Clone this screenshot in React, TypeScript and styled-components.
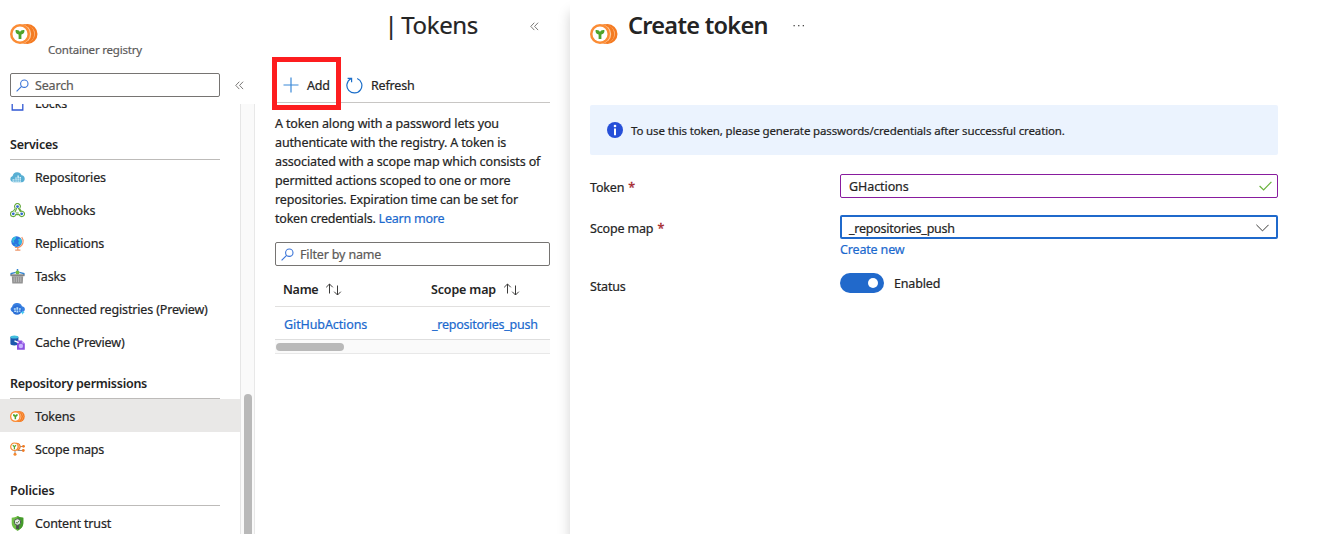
import React from "react";
import styled, { createGlobalStyle } from "styled-components";

const GlobalStyle = createGlobalStyle`
  * { box-sizing: border-box; }
  body {
    margin: 0;
    background: #fff;
    color: #242424;
    font-family: "Noto Sans", "Open Sans", sans-serif;
    font-size: 12.5px;
    overflow: hidden;
  }
  svg { display: block; flex: none; }
`;

const Page = styled.div`
  display: grid;
  grid-template-columns: 255px 315px 1fr;
  width: 1344px;
  height: 534px;
  overflow: hidden;
`;

const Label = styled.span<{ $ls?: number; $bold?: boolean }>`
  white-space: nowrap;
  letter-spacing: ${(p) => p.$ls ?? -0.16}px;
  -webkit-text-stroke: ${(p) => (p.$bold ? "0" : "0.2px")};
`;

/* Sidebar */
const Sidebar = styled.aside`
  display: flex;
  flex-direction: column;
  height: 534px;
  overflow: hidden;
`;

const ResourceHeader = styled.header`
  display: flex;
  height: 73px;
  padding: 24px 0 0 10px;
  gap: 10px;
  flex: none;
`;

const ResourceType = styled.div`
  padding-top: 18px;
  line-height: 16px;
  font-size: 11.5px;
  color: #5c5b5a;
`;

const SearchRow = styled.div`
  display: flex;
  align-items: center;
  gap: 15px;
  height: 24px;
  padding-left: 10px;
  flex: none;
`;

const SearchBox = styled.div<{ $width: number }>`
  display: flex;
  align-items: center;
  gap: 6px;
  width: ${(p) => p.$width}px;
  height: 24px;
  padding: 0 5px;
  border: 1px solid #767472;
  border-radius: 2px;
  color: #5c5a58;
`;

const NavViewport = styled.div`
  display: grid;
  grid-template-columns: 240px 15px;
  margin-top: 7px;
  height: 430px;
  overflow: hidden;
`;

const NavList = styled.nav`
  margin-top: -18px;
`;

const NavHeading = styled.h2`
  display: flex;
  align-items: center;
  height: 41px;
  margin: 0 20px 0 10px;
  padding-top: 10px;
  border-bottom: 1px solid #bdbbb9;
  font-size: 12.5px;
  font-weight: 600;
`;

const NavItem = styled.div<{ $active?: boolean }>`
  display: flex;
  align-items: center;
  gap: 10px;
  height: 33px;
  padding-left: 10px;
  padding-top: 1px;
  background: ${(p) => (p.$active ? "#e9e8e7" : "transparent")};
`;

const ScrollTrack = styled.div`
  padding: 290px 0 0 3px;
  background: #fafafa;
  border-left: 1px solid #e6e6e6;
  border-right: 1px solid #e8e8e8;
`;

const ScrollThumb = styled.div`
  width: 8px;
  height: 300px;
  border-radius: 4px;
  background: #b9b9b9;
`;

/* Token list */
const ListPane = styled.section`
  display: flex;
  flex-direction: column;
  padding: 0 20px;
`;

const ListTitle = styled.header`
  display: flex;
  align-items: center;
  justify-content: flex-end;
  gap: 52px;
  height: 52px;
  padding-right: 11px;
  font-size: 24px;
  line-height: 32px;
`;

const TitleText = styled.div`
  padding-bottom: 3px;
  word-spacing: -2px;
`;

const Toolbar = styled.div`
  display: flex;
  align-items: center;
  height: 51px;
  padding: 16px 0 0 8px;
  border-bottom: 1px solid #c8c6c4;
  position: relative;
`;

const ToolButton = styled.div<{ $gap: number }>`
  display: flex;
  align-items: center;
  gap: ${(p) => p.$gap}px;
  margin-right: 16px;
`;

const Highlight = styled.div`
  position: absolute;
  left: -3px;
  top: 5px;
  width: 69px;
  height: 53px;
  border: 5px solid #fd1d1f;
`;

const Description = styled.p`
  margin: 11px 0 14px;
  line-height: 19px;
`;

const Line = styled.span`
  display: block;
`;

const Link = styled.a`
  color: #1b69ce;
`;

const TableRow = styled.div<{ $head?: boolean }>`
  display: grid;
  grid-template-columns: 148px 1fr;
  align-items: center;
  height: ${(p) => (p.$head ? 41 : 33)}px;
  padding: ${(p) => (p.$head ? "6px 0 0 8px" : "1px 0 0 9px")};
  border-bottom: ${(p) => (p.$head ? "1px solid #e1e0df" : "0")};
  font-weight: ${(p) => (p.$head ? 600 : 400)};
  color: ${(p) => (p.$head ? "#242424" : "#1b69ce")};
`;

const HeadCell = styled.div`
  display: flex;
  align-items: center;
  gap: 7px;
`;

const HorizontalTrack = styled.div`
  height: 15px;
  padding: 3px 1px;
  margin-top: -1px;
  background: #fafafa;
  border-top: 1px solid #dedede;
  border-bottom: 1px solid #e8e8e8;
`;

const HorizontalThumb = styled.div`
  width: 68px;
  height: 8px;
  border-radius: 4px;
  background: #b9b9b9;
`;

/* Create token blade */
const Blade = styled.main`
  padding-left: 20px;
  background: #fff;
  box-shadow: 0 12px 12px rgba(0, 0, 0, 0.18);
`;

const BladeHeader = styled.header`
  display: flex;
  height: 105px;
  padding-top: 10px;
`;

const BladeIcon = styled.div`
  padding-top: 14px;
  width: 38px;
`;

const BladeTitle = styled.h1`
  margin: 0;
  width: 165px;
  font-size: 23.5px;
  font-weight: 600;
  line-height: 31px;
`;

const InfoBanner = styled.div`
  display: flex;
  align-items: center;
  gap: 8px;
  width: 688px;
  height: 50px;
  padding-left: 17px;
  background: #ebf3fe;
  border-radius: 2px;
  font-size: 11.5px;
`;

const Field = styled.div<{ $top: number }>`
  display: grid;
  grid-template-columns: 250px 438px;
  margin-top: ${(p) => p.$top}px;
`;

const FieldLabel = styled.label<{ $top?: number }>`
  padding-top: ${(p) => p.$top ?? 5}px;
  line-height: 18px;
`;

const Required = styled.span`
  color: #a4262c;
  margin-left: 4px;
  -webkit-text-stroke: 0.3px;
`;

const Input = styled.div<{ $focus?: boolean }>`
  display: flex;
  align-items: center;
  justify-content: space-between;
  height: 24px;
  padding: ${(p) => (p.$focus ? "2px 7px 0 7px" : "0 5px 0 8px")};
  border: ${(p) => (p.$focus ? "2px solid #1f69cb" : "1px solid #881c9e")};
  border-radius: 2px;
`;

const CreateLink = styled(Link)`
  display: block;
  line-height: 18px;
  padding-top: 2px;
`;

const StatusValue = styled.div`
  display: flex;
  align-items: center;
  align-self: start;
  gap: 10px;
  height: 20px;
`;

const Toggle = styled.div`
  display: flex;
  align-items: center;
  justify-content: flex-end;
  width: 44px;
  height: 20px;
  padding-right: 6px;
  border-radius: 10px;
  background: #2169cb;
`;

const Knob = styled.div`
  width: 10px;
  height: 10px;
  border-radius: 50%;
  background: #fff;
`;

const CoinsIcon = ({ width, height }: { width: number; height: number }) => (
  <svg width={width} height={height} viewBox="0 0 28 20" preserveAspectRatio="none">
    <circle cx="17.5" cy="10" r="10" fill="#f57a20" />
    <circle cx="15.8" cy="10" r="9" fill="#fdd6b0" />
    <circle cx="14.5" cy="10" r="9.800" fill="#f47b22" />
    <circle cx="12" cy="10" r="9.200" fill="#fdcfa5" />
    <circle cx="10" cy="10" r="10" fill="#fb8c35" />
    <circle cx="10" cy="10" r="7.500" fill="#fff" />
    <path d="M5.500 6.200c2.300-.5 4 .4 4.500 1.800.5-1.400 2.300-2.300 4.500-1.800.1 2.400-1.200 3.900-3.100 4.200v4.500H8.600v-4.500c-2-.3-3.200-1.800-3.100-4.200z" fill="#4fa32a" />
  </svg>
);

const ChevronsLeft = () => (
  <svg width="9" height="9" viewBox="0 0 9 9" fill="none" stroke="#6b6967" strokeWidth="0.9">
    <path d="M4.300.7.8 4.400l3.500 3.700M8.100.7 4.600 4.400l3.500 3.700" />
  </svg>
);

const SearchIcon = () => (
  <svg width="13" height="13" viewBox="0 0 13 13" fill="none" stroke="#3a74d8" strokeWidth="1.1">
    <circle cx="8.300" cy="4.700" r="3.700" />
    <path d="M5.600 7.400.6 12.300" />
  </svg>
);

const SortIcon = () => (
  <svg width="17" height="13" viewBox="0 0 17 13" fill="none" stroke="#3b3a39" strokeWidth="1">
    <path d="M4.500 10.500V1M1.200 4.300 4.500 1l3.300 3.300M12.500 2.500V12M9.200 8.700l3.300 3.300 3.300-3.300" />
  </svg>
);

const LockIcon = () => (
  <svg width="15" height="15" viewBox="0 0 15 15" fill="none" stroke="#3158d3" strokeWidth="1.300">
    <path d="M4.500 6V3.500a3 3 0 0 1 6 0V6M2.200 6h10.600v8H2.200z" />
  </svg>
);

const RepositoriesIcon = () => (
  <svg width="15" height="15" viewBox="0 0 15 15">
    <path d="M3 12.300A3.300 3.300 0 0 1 2.600 5.900 4.700 4.700 0 0 1 11.600 5.300a3.600 3.600 0 0 1 .6 7z" fill="#58afd3" />
    <path d="M2.500 9.300h2v2.500h-2zM5.300 7.500h1.500v4.300H5.300zM7.400 5.500h1.500v6.300H7.400zM9.500 7h1.500v4.800H9.500z" fill="#d6eff9" />
    <path d="M2.500 10.400H11M5.300 8.700H11" stroke="#58afd3" strokeWidth=".5" />
  </svg>
);

const WebhooksIcon = () => (
  <svg width="15" height="15" viewBox="0 0 15 15" fill="none" stroke="#63a83a" strokeWidth="1.100">
    <path d="M5.300 5.200a2.800 2.800 0 1 1 4.500-.2M5.300 5.200 3.300 8.300M9.400 5.300l1.900 3M6.800 5 4.900 9.200M8.300 5l2 3.600" />
    <path d="M3.300 8.200a2.700 2.700 0 1 0 2.500 3.400h3.400a2.700 2.700 0 1 0 .8-2.700M5.800 10h3" />
    <circle cx="7.500" cy="3.600" r="1.400" fill="#3169cf" stroke="none" />
    <circle cx="3.300" cy="10.800" r="1.400" fill="#3169cf" stroke="none" />
    <circle cx="11.700" cy="10.800" r="1.400" fill="#3169cf" stroke="none" />
  </svg>
);

const ReplicationsIcon = () => (
  <svg width="15" height="15" viewBox="0 0 15 15">
    <path d="M11.700 1.100c2.500 3.300 1.900 8.700-3.300 10.400l-3.500-.2M7.800 11.500v2.600M5.200 14.200h5.200" fill="none" stroke="#ee9568" strokeWidth="1.200" />
    <circle cx="6.600" cy="5.600" r="5.300" fill="#2c76df" />
    <path d="M2 3.100C3.400 1.200 5 .7 6.200.9L5.600 3 3.800 4.600l.6 1.900-1.700.2zM8 3.100l2.700-.7c1.200 1.500 1.300 3.600.6 5.200L9.500 9 8.200 7.200l.7-1.700zM5 8l2 .8-.9 1.700z" fill="#35c0dd" />
  </svg>
);

const TasksIcon = () => (
  <svg width="15" height="15" viewBox="0 0 15 15">
    <path d="M1.200 6.500V4.600l4.500-1.200M13.800 6.500V4.600L9.300 3.400M7.500 0v3" fill="none" stroke="#3385d1" strokeWidth="1.500" />
    <circle cx="7.500" cy="3.400" r="2" fill="#73ba45" />
    <path d="M.5 5.300h14v1.900h-14z" fill="#858585" />
    <path d="M1.800 7.200h11.400l-.5 7.300H2.300z" fill="#929292" />
    <path d="M4.200 8.200v5M6.400 8.200v5M8.600 8.200v5M10.800 8.200v5" stroke="#c2c2c2" strokeWidth=".8" />
  </svg>
);

const ConnectedIcon = () => (
  <svg width="15" height="15" viewBox="0 0 15 15">
    <path d="M2.600 9.900A2.700 2.700 0 0 1 2 4.900 5.300 5.300 0 0 1 12 4.300c1.900.3 2.900 1.600 2.900 3 0 1.500-1.100 2.700-2.700 2.700z" fill="#377fe1" />
    <circle cx="7" cy="8" r="4.800" fill="#2c70d6" />
    <path d="M3.800 6.300h2v1.500h-2zM6.400 5.200h1.800v2.600H6.400zM9 6.300h1.800v1.500H9zM4.200 8.600h1.800v1.400H4.200zM6.500 8.600h1.800v1.800H6.500zM9 8.600h1.500v1.200H9z" fill="#b9dffc" />
    <path d="m10.200 10.500 1.800-.6.600-1.300.7 1.300 1.400.7-1.400.7-.7 1.400-.6-1.400z" fill="#43c9f1" />
  </svg>
);

const CacheIcon = () => (
  <svg width="15" height="15" viewBox="0 0 15 15">
    <path d="M.4 2v6.800c0 1 1.700 1.600 4 1.600s4-.6 4-1.600V2z" fill="#1c58ad" />
    <ellipse cx="4.400" cy="2" rx="4" ry="1.500" fill="#42bedd" />
    <path d="M7 5.600h4.800l3 2.900v6.200H7z" fill="#8b4fe0" />
    <path d="M11.800 5.600v2.900h3z" fill="#c7a5f6" />
    <circle cx="10.900" cy="11" r="2.200" fill="#c6b3ff" />
    <path d="M4.500 5.800 8.600 7.700" stroke="#fff" strokeWidth="1.300" />
  </svg>
);

const ScopeMapsIcon = () => (
  <svg width="15" height="15" viewBox="0 0 15 15">
    <path d="M9 4.500h4M7.500 8.500H13M5 8v5" stroke="#8e8e8e" strokeWidth="1" />
    <circle cx="6.800" cy="4.700" r="3.500" fill="#f6b37c" stroke="#f17a22" />
    <circle cx="4.400" cy="4.700" r="3.700" fill="#fff" stroke="#f58930" strokeWidth="1.200" />
    <path d="m2.800 3.300 1.600 1.500L6 3.300M4.400 4.500v2.700" fill="none" stroke="#55a42e" strokeWidth="1.200" />
    <circle cx="13.500" cy="4.300" r="1.400" fill="#f17a22" />
    <circle cx="13.300" cy="8.500" r="1.400" fill="#f17a22" />
    <circle cx="5" cy="12.300" r="1.500" fill="#f58930" />
  </svg>
);

const ShieldIcon = () => (
  <svg width="15" height="15" viewBox="0 0 15 15">
    <path d="M7.500 0C5.700 1.300 3.800 1.700 1.700 1.700V7c0 4 3.300 6.500 5.800 7.800 2.500-1.300 5.800-3.800 5.800-7.800V1.700C11.200 1.700 9.300 1.300 7.500 0z" fill="#6fbf45" />
    <path d="M7.500 0v14.800c2.500-1.300 5.800-3.800 5.800-7.800V1.700C11.200 1.700 9.300 1.300 7.500 0z" fill="#449a2c" />
    <path d="M6.100 8h2.800v5H6.100z" fill="#4c4f50" />
    <circle cx="7.500" cy="6" r="3.200" fill="#e8ede5" stroke="#44504a" strokeWidth=".9" />
    <path d="m5.900 6 1.200 1.300 2.200-2.600" fill="none" stroke="#46773a" strokeWidth=".9" />
  </svg>
);

const PlusIcon = () => (
  <svg width="16" height="16" viewBox="0 0 16 16" stroke="#3b89d7" strokeWidth="1.200">
    <path d="M8 .5v15M.5 8h15" />
  </svg>
);

const RefreshIcon = () => (
  <svg width="17" height="17" viewBox="0 0 17 17" fill="none" stroke="#1b6ec9" strokeWidth="1.200">
    <path d="M11.200 1.500a7.500 7.500 0 1 1-6.300.3M1.600 1.300h4v4" />
  </svg>
);

const InfoIcon = () => (
  <svg width="16" height="16" viewBox="0 0 16 16">
    <circle cx="8" cy="8" r="8" fill="#264fd8" />
    <circle cx="8" cy="4" r="1.300" fill="#fff" />
    <path d="M8 6.500v6.700" stroke="#fff" strokeWidth="2" />
  </svg>
);

const MoreIcon = () => (
  <svg width="13" height="32" viewBox="0 0 13 32" fill="#4a4948">
    <rect x="0.500" y="15" width="1.300" height="1.300" />
    <rect x="5.100" y="15" width="1.300" height="1.300" />
    <rect x="9.700" y="15" width="1.300" height="1.300" />
  </svg>
);

const CheckIcon = () => (
  <svg width="13" height="10" viewBox="0 0 13 10" fill="none" stroke="#69b23c" strokeWidth="1.200">
    <path d="m.6 5 4 4L12.400.8" />
  </svg>
);

const ChevronDown = () => (
  <svg width="13" height="8" viewBox="0 0 13 8" fill="none" stroke="#3b3a39" strokeWidth="1">
    <path d="m.4.8 6.100 6.100L12.600.8" />
  </svg>
);

const services = [
  { label: "Repositories", icon: <RepositoriesIcon /> },
  { label: "Webhooks", icon: <WebhooksIcon /> },
  { label: "Replications", icon: <ReplicationsIcon /> },
  { label: "Tasks", icon: <TasksIcon /> },
  { label: "Connected registries (Preview)", icon: <ConnectedIcon /> },
  { label: "Cache (Preview)", icon: <CacheIcon /> },
];

const description = [
  "A token along with a password lets you",
  "authenticate with the registry. A token is",
  "associated with a scope map which consists of",
  "permitted actions scoped to one or more",
  "repositories. Expiration time can be set for",
];

export default function App() {
  return (
    <Page>
      <GlobalStyle />
      <Sidebar>
        <ResourceHeader>
          <CoinsIcon width={28} height={20} />
          <ResourceType><Label $ls={-0.2}>Container registry</Label></ResourceType>
        </ResourceHeader>
        <SearchRow>
          <SearchBox $width={210}><SearchIcon /><Label>Search</Label></SearchBox>
          <ChevronsLeft />
        </SearchRow>
        <NavViewport>
          <NavList>
            <NavItem><LockIcon /><Label>Locks</Label></NavItem>
            <NavHeading><Label $bold $ls={-0.22}>Services</Label></NavHeading>
            {services.map((s) => (
              <NavItem key={s.label}>{s.icon}<Label>{s.label}</Label></NavItem>
            ))}
            <NavHeading><Label $bold $ls={-0.26}>Repository permissions</Label></NavHeading>
            <NavItem $active><CoinsIcon width={15} height={11} /><Label>Tokens</Label></NavItem>
            <NavItem><ScopeMapsIcon /><Label>Scope maps</Label></NavItem>
            <NavHeading><Label $bold>Policies</Label></NavHeading>
            <NavItem><ShieldIcon /><Label>Content trust</Label></NavItem>
          </NavList>
          <ScrollTrack><ScrollThumb /></ScrollTrack>
        </NavViewport>
      </Sidebar>

      <ListPane>
        <ListTitle>
          <TitleText><Label $ls={-0.35}>| Tokens</Label></TitleText>
          <ChevronsLeft />
        </ListTitle>
        <Toolbar>
          <ToolButton $gap={8}><PlusIcon /><Label>Add</Label></ToolButton>
          <ToolButton $gap={8}><RefreshIcon /><Label>Refresh</Label></ToolButton>
          <Highlight />
        </Toolbar>
        <Description>
          {description.map((d) => <Line key={d}><Label $ls={-0.13}>{d}</Label></Line>)}
          <Line><Label $ls={-0.22}>token credentials. <Link>Learn more</Link></Label></Line>
        </Description>
        <SearchBox $width={275}><SearchIcon /><Label>Filter by name</Label></SearchBox>
        <TableRow $head>
          <HeadCell><Label $bold $ls={-0.3}>Name</Label><SortIcon /></HeadCell>
          <HeadCell><Label $bold>Scope map</Label><SortIcon /></HeadCell>
        </TableRow>
        <TableRow>
          <Label $ls={-0.1}>GitHubActions</Label>
          <Label $ls={-0.25}>_repositories_push</Label>
        </TableRow>
        <HorizontalTrack><HorizontalThumb /></HorizontalTrack>
      </ListPane>

      <Blade>
        <BladeHeader>
          <BladeIcon><CoinsIcon width={28} height={20} /></BladeIcon>
          <BladeTitle><Label $bold $ls={-0.7}>Create token</Label></BladeTitle>
          <MoreIcon />
        </BladeHeader>
        <InfoBanner>
          <InfoIcon />
          <Label $ls={-0.14}>To use this token, please generate passwords/credentials after successful creation.</Label>
        </InfoBanner>
        <Field $top={19}>
          <FieldLabel><Label>Token</Label><Required>*</Required></FieldLabel>
          <Input><Label $ls={-0.08}>GHactions</Label><CheckIcon /></Input>
        </Field>
        <Field $top={17}>
          <FieldLabel><Label>Scope map</Label><Required>*</Required></FieldLabel>
          <div>
            <Input $focus><Label $ls={-0.24}>_repositories_push</Label><ChevronDown /></Input>
            <CreateLink><Label>Create new</Label></CreateLink>
          </div>
        </Field>
        <Field $top={14}>
          <FieldLabel><Label>Status</Label></FieldLabel>
          <StatusValue><Toggle><Knob /></Toggle><Label>Enabled</Label></StatusValue>
        </Field>
      </Blade>
    </Page>
  );
}
